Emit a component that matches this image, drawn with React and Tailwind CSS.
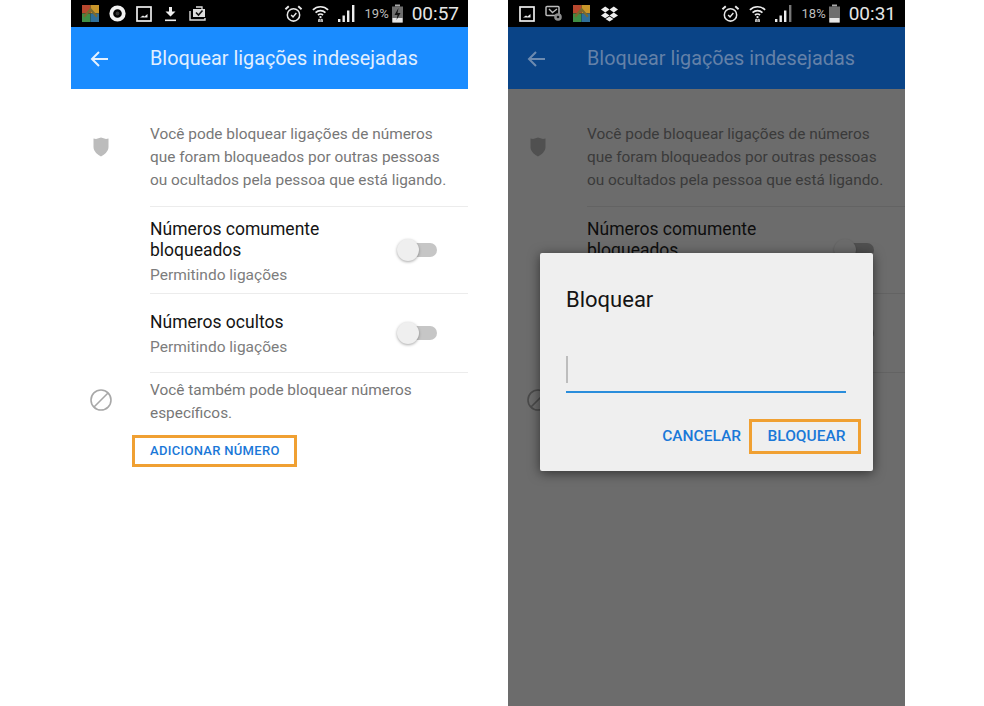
import React from "react";

const FONT = "font-['Roboto','Liberation_Sans',sans-serif]";

// status bar glyphs
const AvgLogo = () => (
  <svg width="17" height="17" viewBox="0 0 16 16">
    <rect x="0" y="0" width="8" height="8" fill="#b8482e" />
    <rect x="8" y="0" width="8" height="8" fill="#c9962a" />
    <rect x="0" y="8" width="8" height="8" fill="#3f8f45" />
    <rect x="8" y="8" width="8" height="8" fill="#2f6f9a" />
    <path d="M2 11 L8 4 L14 11" stroke="#7a6a30" strokeWidth="2" fill="none" />
  </svg>
);

const RingIcon = () => (
  <svg width="17" height="17" viewBox="0 0 18 18">
    <circle cx="9" cy="9" r="6.6" fill="none" stroke="#f2f2f2" strokeWidth="4" />
    <circle cx="9" cy="9" r="2" fill="#333" />
  </svg>
);

const PictureIcon = () => (
  <svg width="16" height="16" viewBox="0 0 16 16" fill="none">
    <rect x="1" y="1" width="14" height="14" stroke="#eee" strokeWidth="1.7" />
    <path d="M4 11.5 L7 9.5 L8.5 10.5 L11.5 8 L11.5 11.5 Z" fill="#eee" />
  </svg>
);

const DownloadIcon = () => (
  <svg width="11" height="16" viewBox="0 0 11 16" fill="#eee">
    <path d="M4 1 H7 V5.5 H10.5 L5.5 10.5 L0.5 5.5 H4 Z" />
    <rect x="0" y="13.5" width="11" height="1.6" />
  </svg>
);

const CaseIcon = () => (
  <svg width="17" height="15" viewBox="0 0 17 15" fill="none">
    <path d="M1 5 V14 H16 V12" stroke="#ddd" strokeWidth="1.4" />
    <rect x="4" y="3" width="12" height="8" fill="#ddd" />
    <path d="M7 1 H13 V3" stroke="#ddd" strokeWidth="1.3" />
    <path d="M7 6.5 L9.5 9 L13.5 4.5" stroke="#111" strokeWidth="1.6" />
  </svg>
);

const ChatGearIcon = () => (
  <svg width="18" height="17" viewBox="0 0 18 17" fill="none">
    <rect x="1" y="1.5" width="13" height="9" rx="1" stroke="#bbb" strokeWidth="1.5" />
    <path d="M4 4 L7.5 7.5 L12 4" stroke="#bbb" strokeWidth="1.4" />
    <circle cx="13" cy="12" r="3.8" fill="#8e8e8e" />
    <circle cx="13" cy="12" r="1.3" fill="#111" />
  </svg>
);

const DropboxIcon = () => (
  <svg width="19" height="16" viewBox="0 0 17 15" fill="#eee">
    <path d="M4.5 0.5 L8.5 3.2 L4.5 6 L0.5 3.2 Z" />
    <path d="M12.5 0.5 L16.5 3.2 L12.5 6 L8.5 3.2 Z" />
    <path d="M4.5 6 L8.5 8.8 L4.5 11.5 L0.5 8.8 Z" />
    <path d="M12.5 6 L16.5 8.8 L12.5 11.5 L8.5 8.8 Z" />
    <path d="M4.8 12.2 L8.5 9.8 L12.2 12.2 L8.5 14.6 Z" />
  </svg>
);

const AlarmIcon = () => (
  <svg width="19" height="20" viewBox="0 0 20 20" fill="none" stroke="#e8e8e8">
    <circle cx="10" cy="11" r="6.5" strokeWidth="1.6" />
    <path d="M7.5 11 L9.5 13 L13 9" strokeWidth="1.5" />
    <path d="M1.5 5 L5 1.8 M18.5 5 L15 1.8" strokeWidth="2" />
  </svg>
);

const WifiIcon = () => (
  <svg width="17" height="21" viewBox="0 0 19 21" fill="none" stroke="#eee">
    <path d="M1 6.5 A12 12 0 0 1 18 6.5" strokeWidth="1.9" />
    <path d="M4 9.5 A8 8 0 0 1 15 9.5" strokeWidth="1.9" />
    <path d="M6.7 12.3 A4 4 0 0 1 12.3 12.3" strokeWidth="1.9" />
    <circle cx="9.5" cy="14.5" r="1.3" fill="#eee" stroke="none" />
    <path d="M7.5 20 V17 H8.8 V20 M10.2 20 V17 H11.5 V20" strokeWidth="1.1" />
  </svg>
);

const SignalIcon = ({ dim }) => (
  <svg width="17" height="17" viewBox="0 0 17 17" fill="#eee">
    <rect x="0" y="14" width="2.4" height="3" />
    <rect x="4.5" y="10.5" width="2.4" height="6.5" />
    <rect x="9" y="5.5" width="2.4" height="11.5" />
    <rect x="14" y="0" width="2.4" height="17" fill={dim ? "#777" : "#eee"} />
  </svg>
);

const BatteryIcon = ({ charging }) => (
  <svg width="13" height="19" viewBox="0 0 12 19">
    <rect x="3.5" y="0.5" width="5" height="2" fill="#aaa" />
    <rect x="0.5" y="2.5" width="11" height="16" fill="#6e6e6e" />
    <rect x="1" y="14" width="10" height="4.5" fill="#e6e6e6" />
    {charging && <path d="M7 4 L3 11 H6 L5 16 L9 9 H6 Z" fill="#111" />}
  </svg>
);

const StatusBar = ({ icons, battery, time, charging, dim }) => (
  <div className="flex h-[27px] items-center justify-between bg-black pr-[9px] pl-[11px]">
    <div className="flex items-center gap-[10px]">{icons}</div>
    <div className="flex items-center">
      <AlarmIcon />
      <span className="ml-[9px]"><WifiIcon /></span>
      <span className="ml-[9px]"><SignalIcon dim={dim} /></span>
      <span className="ml-[10px] text-[13px] text-[#bdbdbd]">{battery}</span>
      <span className="ml-[2px]"><BatteryIcon charging={charging} /></span>
      <span className="ml-[8px] text-[19px] leading-none text-[#e6e6e6]">{time}</span>
    </div>
  </div>
);

const BackArrow = ({ color }) => (
  <svg width="18" height="16" viewBox="0 0 18 16" fill="none" stroke={color} strokeWidth="2">
    <path d="M18 8 H2" />
    <path d="M9 1 L2 8 L9 15" />
  </svg>
);

const Shield = ({ color }) => (
  <svg width="16" height="20" viewBox="0 0 16 20">
    <path d="M0.5 1.5 L3 2 L8 0.5 L13 2 L15.5 1.5 V10 C15.5 14.5 11 18 8 19.5 C5 18 0.5 14.5 0.5 10 Z" fill={color} />
  </svg>
);

const BlockIcon = ({ color }) => (
  <svg width="22" height="22" viewBox="0 0 22 22" fill="none" stroke={color} strokeWidth="1.6">
    <circle cx="11" cy="11" r="10" />
    <path d="M4 18 L18 4" />
  </svg>
);

const Toggle = ({ dim }) => (
  <div className="relative mb-[3px] h-[14px] w-[40px] rounded-full">
    <div className={`absolute top-0 right-0 h-[14px] w-[30px] rounded-full ${dim ? "bg-[#505050]" : "bg-[#c6c6c6]"}`} />
    <div
      className={`absolute top-[-4px] left-0 h-[22px] w-[22px] rounded-full ${
        dim ? "bg-[#6b6b6b] shadow-[0_1px_2px_rgba(0,0,0,0.3)]" : "bg-[#efefef] shadow-[0_1px_3px_rgba(0,0,0,0.35)]"
      }`}
    />
  </div>
);

const SettingRow = ({ title, dim, className }) => (
  <div className={`flex items-center justify-between pr-[31px] ${className}`}>
    <div>
      <p className={`text-[17.5px] leading-[21px] ${dim ? "text-[#0e0e0e]" : "text-[#141414]"}`}>{title}</p>
      <p className={`mt-[5px] text-[15.5px] leading-[18px] ${dim ? "text-[#3f3f3f]" : "text-[#7d7d7d]"}`}>Permitindo ligações</p>
    </div>
    <Toggle dim={dim} />
  </div>
);

const Screen = ({ dim, statusIcons, battery, time, charging, children }) => {
  const bodyText = dim ? "text-[#3a3a3a]" : "text-[#777]";
  const line = dim ? "border-[#636363]" : "border-[#ececec]";
  const iconColor = dim ? "#505050" : "#bcbcbc";
  return (
    <div className={`relative h-[706px] w-[397px] ${dim ? "bg-[#6c6c6c]" : "bg-white"}`}>
      <StatusBar icons={statusIcons} battery={battery} time={time} charging={charging} dim={dim} />
      <div className={`flex h-[62px] items-center pt-[2px] pl-[19px] ${dim ? "bg-[#0a4487]" : "bg-[#1a8cff]"}`}>
        <BackArrow color={dim ? "#6d8bb0" : "#e4f1ff"} />
        <h1 className={`ml-[42px] text-[19.8px] ${dim ? "text-[#6481a8]" : "text-[#e0efff]"}`}>Bloquear ligações indesejadas</h1>
      </div>

      <div className="flex pt-[34px] pl-[21px]">
        <div className="w-[58px] shrink-0 pt-[14px] pl-[1px]">
          <Shield color={iconColor} />
        </div>
        <div className="flex-1">
          <p className={`border-b pb-[14px] text-[15.4px] leading-[23px] ${bodyText} ${line}`}>
            Você pode bloquear ligações de números
            <br />
            que foram bloqueados por outras pessoas
            <br />
            ou ocultados pela pessoa que está ligando.
          </p>
          <SettingRow title={<>Números comumente<br />bloqueados</>} dim={dim} className={`border-b pt-[12px] pb-[9px] ${line}`} />
          <SettingRow title="Números ocultos" dim={dim} className={`border-b pt-[18px] pb-[16px] ${line}`} />
        </div>
      </div>

      <div className="flex pt-[6px] pl-[19px]">
        <div className="w-[60px] shrink-0 pt-[10px]">
          <BlockIcon color={dim ? "#4a4a4a" : "#a8a8a8"} />
        </div>
        <p className={`text-[15.4px] leading-[23px] ${bodyText}`}>
          Você também pode bloquear números
          <br />
          específicos.
        </p>
      </div>

      {!dim && (
        <div className="mt-[10px] ml-[61px] flex h-[32px] w-[165px] items-center border-[3px] border-[#f0a032] pl-[15px]">
          <span className="text-[13px] font-medium tracking-[0.3px] text-[#1a78d8]">ADICIONAR NÚMERO</span>
        </div>
      )}

      {children}
    </div>
  );
};

const Dialog = () => (
  <div className="absolute top-[253px] left-[32px] h-[218px] w-[333px] rounded-[2px] bg-[#efefef] pt-[33px] pr-[27px] pl-[26px] shadow-[0_2px_12px_rgba(0,0,0,0.55)]">
    <h2 className="text-[22px] leading-[28px] text-[#141414]">Bloquear</h2>
    <div className="mt-[41px] h-[38px] border-b-[2px] border-[#2a8ddb] pt-[1px]">
      <div className="h-[27px] w-[2px] bg-[#bdbdbd]" />
    </div>
    <div className="mt-[26px] -mr-[15px] flex items-center justify-end">
      <span className="mr-[8px] text-[15.5px] font-medium text-[#1a78d8]">CANCELAR</span>
      <div className="flex h-[35px] w-[112px] items-center justify-center border-[3px] border-[#f0a032] pl-[3px]">
        <span className="text-[15.5px] font-medium text-[#1a78d8]">BLOQUEAR</span>
      </div>
    </div>
  </div>
);

export default function App() {
  return (
    <div className={`flex h-[706px] w-[984px] gap-[40px] overflow-hidden bg-white pl-[71px] ${FONT}`}>
      <Screen
        battery="19%"
        time="00:57"
        charging
        statusIcons={
          <>
            <AvgLogo />
            <RingIcon />
            <PictureIcon />
            <span className="mx-[3px]"><DownloadIcon /></span>
            <CaseIcon />
          </>
        }
      />
      <Screen
        dim
        battery="18%"
        time="00:31"
        statusIcons={
          <>
            <PictureIcon />
            <ChatGearIcon />
            <AvgLogo />
            <DropboxIcon />
          </>
        }
      >
        <Dialog />
      </Screen>
    </div>
  );
}
